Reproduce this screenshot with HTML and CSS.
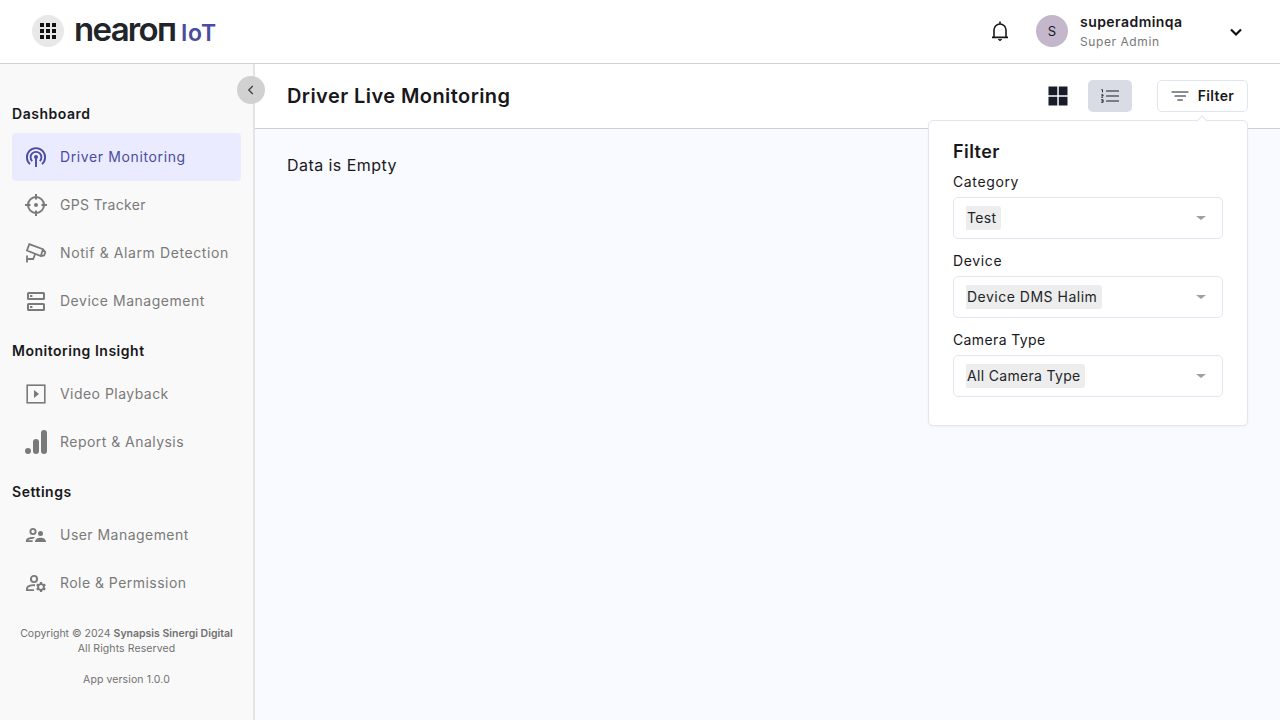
FILE: index.html
```html
<!DOCTYPE html>
<html lang="en">
<head>
<meta charset="utf-8">
<title>Driver Live Monitoring</title>
<link rel="stylesheet" href="styles.css">
</head>
<body>
<header class="topbar">
  <button class="apps"><svg width="16" height="16" viewBox="0 0 16 16" fill="#111"><path d="M0 0h4v4H0zM6 0h4v4H6zM12 0h4v4h-4zM0 6h4v4H0zM6 6h4v4H6zM12 6h4v4h-4zM0 12h4v4H0zM6 12h4v4H6zM12 12h4v4h-4z"/></svg></button>
  <div class="logo"><span class="logo-name">nearoп</span><span class="logo-iot">IoT</span></div>
  <svg class="bell" width="24" height="24" viewBox="0 0 24 24" fill="none" stroke="#18181b" stroke-width="1.6"><path d="M4 18.4h16M6 18V11a6 6 0 0 1 12 0v7M12 2.5V5" /><path d="M10.2 20.4h3.6L12 21.8z" fill="#18181b" stroke-width=".8"/></svg>
  <div class="avatar">S</div>
  <div class="who"><span class="who-name">superadminqa</span><span class="who-role">Super Admin</span></div>
  <svg class="chev" width="16" height="16" viewBox="0 0 16 16" fill="none" stroke="#111" stroke-width="2.2"><path d="M3 5.5l5 5 5-5"/></svg>
</header>
<div class="shell">
  <aside class="sidebar">
    <button class="collapse"><svg width="12" height="12" viewBox="0 0 12 12" fill="none" stroke="#444" stroke-width="1.4"><path d="M7.8 2L3.8 6l4 4"/></svg></button>
    <nav>
      <section class="group">
        <h2>Dashboard</h2>
        <a class="item active"><svg width="24" height="24" viewBox="0 0 24 24" fill="none" stroke="currentColor" stroke-width="1.9"><path d="M6 19.1a9.1 9.1 0 1 1 12 0M8.2 16.1a5.4 5.4 0 1 1 7.6 0M12 12v10"/><circle cx="12" cy="12" r="2" fill="currentColor" stroke="none"/></svg><span class="w-driver">Driver Monitoring</span></a>
        <a class="item"><svg width="24" height="24" viewBox="0 0 24 24" fill="none" stroke="currentColor" stroke-width="2"><circle cx="12" cy="12" r="8"/><path d="M12 1v5.5M12 17.5V23M1 12h5.5M17.5 12H23"/><circle cx="12" cy="12" r="2" fill="currentColor" stroke="none"/></svg><span class="w-gps">GPS Tracker</span></a>
        <a class="item"><svg width="24" height="24" viewBox="0 0 24 24" fill="none" stroke="currentColor" stroke-width="1.8"><path d="M5.300 3.200L19 8.200 16.800 15 3 9.500zM19 8.200l2.300 3-1.200 3.300-3.300.5M11.200 12.800L9.200 18H3M3 14.500v7"/></svg><span class="w-notif">Notif &amp; Alarm Detection</span></a>
        <a class="item"><svg width="24" height="24" viewBox="0 0 24 24" fill="none" stroke="currentColor" stroke-width="2"><rect x="4" y="4" width="16" height="6" rx=".6"/><rect x="4" y="15" width="16" height="6" rx=".6"/><path d="M6 7h2.400M6 18h2.400" stroke-width="2"/></svg><span class="w-device">Device Management</span></a>
      </section>
      <section class="group">
        <h2>Monitoring Insight</h2>
        <a class="item"><svg width="24" height="24" viewBox="0 0 24 24" fill="none" stroke="currentColor" stroke-width="1.6"><rect x="3.200" y="3.200" width="17.600" height="17.600"/><path d="M10 8v8l5-4z" fill="currentColor" stroke="none"/></svg><span class="w-video">Video Playback</span></a>
        <a class="item"><svg width="24" height="24" viewBox="0 0 24 24" fill="currentColor"><circle cx="4" cy="21" r="3"/><rect x="9" y="9" width="6" height="15" rx="3"/><rect x="17" y="0" width="6" height="24" rx="3"/></svg><span class="w-report">Report &amp; Analysis</span></a>
      </section>
      <section class="group">
        <h2>Settings</h2>
        <a class="item"><svg width="24" height="24" viewBox="0 0 24 24" fill="currentColor"><circle cx="9" cy="8.500" r="2.600" fill="none" stroke="currentColor" stroke-width="1.900"/><circle cx="16.500" cy="10.500" r="2.500"/><path d="M11 19c0-2.700 2.500-4.200 5.500-4.200S22 16.300 22 19zM2 19v-1.500C2 15 5.500 13.700 11 14l-1.400 1.700C6.500 15.600 4.500 16.500 4.200 17.200h4.600L8.400 19z"/></svg><span class="w-user">User Management</span></a>
        <a class="item"><svg width="24" height="24" viewBox="0 0 24 24" fill="none" stroke="currentColor" stroke-width="1.900"><circle cx="10" cy="8" r="3.100"/><path d="M11 14.200C6.500 13.800 3 15.600 3 17.200V19.100h7"/><circle cx="17" cy="16" r="2.900"/><path d="M17 11v2.200M17 18.800V21M12.700 13.500l1.900 1.100M19.400 17.400l1.900 1.100M12.700 18.500l1.900-1.100M19.400 14.600l1.900-1.100" stroke-width="2.200"/></svg><span class="w-role">Role &amp; Permission</span></a>
      </section>
    </nav>
    <footer class="legal">
      <p>Copyright © 2024 <b>Synapsis Sinergi Digital</b></p>
      <p class="rights">All Rights Reserved</p>
      <p class="version">App version 1.0.0</p>
    </footer>
  </aside>
  <main class="main">
    <div class="titlebar">
      <h1>Driver Live Monitoring</h1>
      <button class="grid-btn"><svg width="20" height="20" viewBox="0 0 20 20" fill="#181c28"><path d="M.5.500h8.800v8.800H.5zM10.800.5h8.700v8.800h-8.700zM.5 10.800h8.800v8.700H.5zM10.800 10.800h8.700v8.700h-8.700z"/></svg></button>
      <button class="list-btn"><svg width="20" height="16" viewBox="0 0 20 16" fill="none" stroke="#181c28"><path d="M6.500 3H18.500M6.500 8H18.500M6.500 13H18.500" stroke-width="1.200" stroke-linecap="round"/><path d="M1.300 1.700h1.200V4.400M1.200 6.800h1.900v1.100H1.600M1.200 9.200h2M1.200 11.700h1.900v2.600H1.200M1.600 13h1.500" stroke-width=".9"/></svg></button>
      <div class="filter-wrap">
        <button class="filter-btn"><svg width="18" height="12" viewBox="0 0 18 12" stroke="#181c28" stroke-width="1.200" stroke-linecap="round"><path d="M1 2h16M4 6h10.500M6.800 10h4.600"/></svg><span>Filter</span></button>
        <div class="popover">
          <h3>Filter</h3>
          <div class="field"><label class="w-cat">Category</label><div class="select"><span class="tag w-test">Test</span><i class="caret"></i></div></div>
          <div class="field"><label class="w-cat">Device</label><div class="select"><span class="tag w-halim">Device DMS Halim</span><i class="caret"></i></div></div>
          <div class="field"><label class="w-cam">Camera Type</label><div class="select"><span class="tag w-allcam">All Camera Type</span><i class="caret"></i></div></div>
        </div>
      </div>
    </div>
    <p class="empty">Data is Empty</p>
  </main>
</div>
</body>
</html>
```
FILE: styles.css
```css
* { box-sizing: border-box; margin: 0; padding: 0; }
body { height: 720px; overflow: hidden; display: flex; flex-direction: column; font-family: Inter, "Liberation Sans", sans-serif; color: #18181b; background: #fff; white-space: nowrap; }
button { border: 0; background: none; font: inherit; color: inherit; display: flex; align-items: center; justify-content: center; flex: none; }
svg { display: block; flex: none; }
.topbar { height: 64px; flex: none; display: flex; align-items: center; padding: 0 36px 1px 32px; border-bottom: 1px solid #d0d0d0; }
.apps { width: 32px; height: 32px; border-radius: 50%; background: #e8e8e8; }
.logo { display: flex; align-items: baseline; margin-left: 10px; line-height: 32px; }
.logo-name { width: 107px; font-size: 33px; font-weight: 600; color: #212529; letter-spacing: -1.7px; }
.logo-iot { font-size: 23px; font-weight: 600; color: #4a4ca0; letter-spacing: .7px; }
.bell { margin-left: auto; }
.avatar { width: 32px; height: 32px; margin-left: 24px; border-radius: 50%; background: #c4b7cb; display: flex; align-items: center; justify-content: center; font-size: 13px; }
.who { width: 148px; margin-left: 12px; display: flex; flex-direction: column; }
.who-name { font-size: 14px; font-weight: 600; line-height: 20px; letter-spacing: .45px; }
.who-role { font-size: 12px; line-height: 18px; color: #777; letter-spacing: .58px; padding-top: 1px; margin-bottom: -1px; }
.chev { margin-top: 1px; }
.shell { flex: 1; display: flex; min-height: 0; }
.sidebar { position: relative; width: 255px; flex: none; background: #f9f9f9; border-right: 2px solid #e4e4e4; padding: 31px 12px 0; display: flex; flex-direction: column; }
.collapse { position: absolute; top: 12px; left: 237px; width: 28px; height: 28px; border-radius: 50%; background: #d1d1d1; }
nav { display: flex; flex-direction: column; gap: 7px; }
.group { display: flex; flex-direction: column; }
.group h2 { height: 38px; line-height: 38px; font-size: 14px; font-weight: 600; letter-spacing: .52px; }
.item { height: 48px; display: flex; align-items: center; gap: 12px; padding-left: 12px; color: #7a7a7a; font-size: 14px; border-radius: 4px; }
.item span { padding-bottom: 2px; }
.item.active { background: #ebebff; color: #4a4ca0; }
.w-driver { letter-spacing: .62px; }
.w-gps { letter-spacing: .3px; }
.w-notif { letter-spacing: .6px; }
.w-device { letter-spacing: .52px; }
.w-video, .w-report, .w-user, .w-role { letter-spacing: .46px; }
.legal { width: 229px; margin-top: 19px; text-align: center; font-size: 10.5px; line-height: 15px; color: #717171; }
.legal b { font-weight: 600; }
.rights, .version { letter-spacing: .1px; }
.version { margin-top: 16px; }
.main { flex: 1; background: #f9faff; min-width: 0; }
.titlebar { height: 65px; display: flex; align-items: center; padding: 0 32px; border-bottom: 1px solid #d0d0d0; background: #fff; }
h1 { font-size: 20px; font-weight: 600; margin-right: auto; line-height: 28px; letter-spacing: .43px; }
.grid-btn { width: 44px; height: 32px; padding: 0 0 1px 1px; }
.list-btn { width: 44px; height: 32px; margin-left: 9px; border-radius: 5px; background: #d9dce4; }
.filter-wrap { position: relative; margin-left: 25px; }
.filter-btn { width: 91px; height: 32px; border: 1px solid #e1e7f0; border-radius: 5px; background: #fff; gap: 9px; font-size: 14px; font-weight: 600; letter-spacing: .35px; }
.filter-btn span { padding-bottom: 1px; }
.popover { position: absolute; top: 40px; right: 0; width: 320px; height: 306px; padding: 16px 24px; border: 1px solid #e1e7f0; border-radius: 5px; background: #fff; box-shadow: 0 1px 2px rgba(30, 50, 90, .05); }
.popover::before { content: ""; position: absolute; top: -4px; right: 41px; width: 7px; height: 7px; border: solid #e1e7f0; border-width: 1px 0 0 1px; background: #fff; transform: rotate(45deg); }
.popover h3 { font-size: 18px; font-weight: 600; line-height: 29px; letter-spacing: .45px; }
.field { margin-bottom: 12px; }
.field label { display: block; font-size: 14px; line-height: 20px; margin: 6px 0 5px; }
.select { height: 42px; border: 1px solid #e1e7f0; border-radius: 5px; padding: 0 16px 0 12px; display: flex; align-items: center; justify-content: space-between; }
.tag { height: 24px; line-height: 24px; padding: 0 4.5px 0 1px; border-radius: 0 3px 3px 0; background: #ededed; color: #212529; font-size: 14px; }
.w-cat { letter-spacing: .63px; }
.w-cam { letter-spacing: .37px; }
.w-test { letter-spacing: .3px; }
.w-halim { letter-spacing: .5px; }
.w-allcam { letter-spacing: .32px; }
.caret { width: 0; height: 0; border: solid transparent; border-width: 4px 5px 0; border-top-color: #a0a0a0; }
.empty { padding: 24px 32px; font-size: 16px; line-height: 24px; letter-spacing: .44px; }
```
